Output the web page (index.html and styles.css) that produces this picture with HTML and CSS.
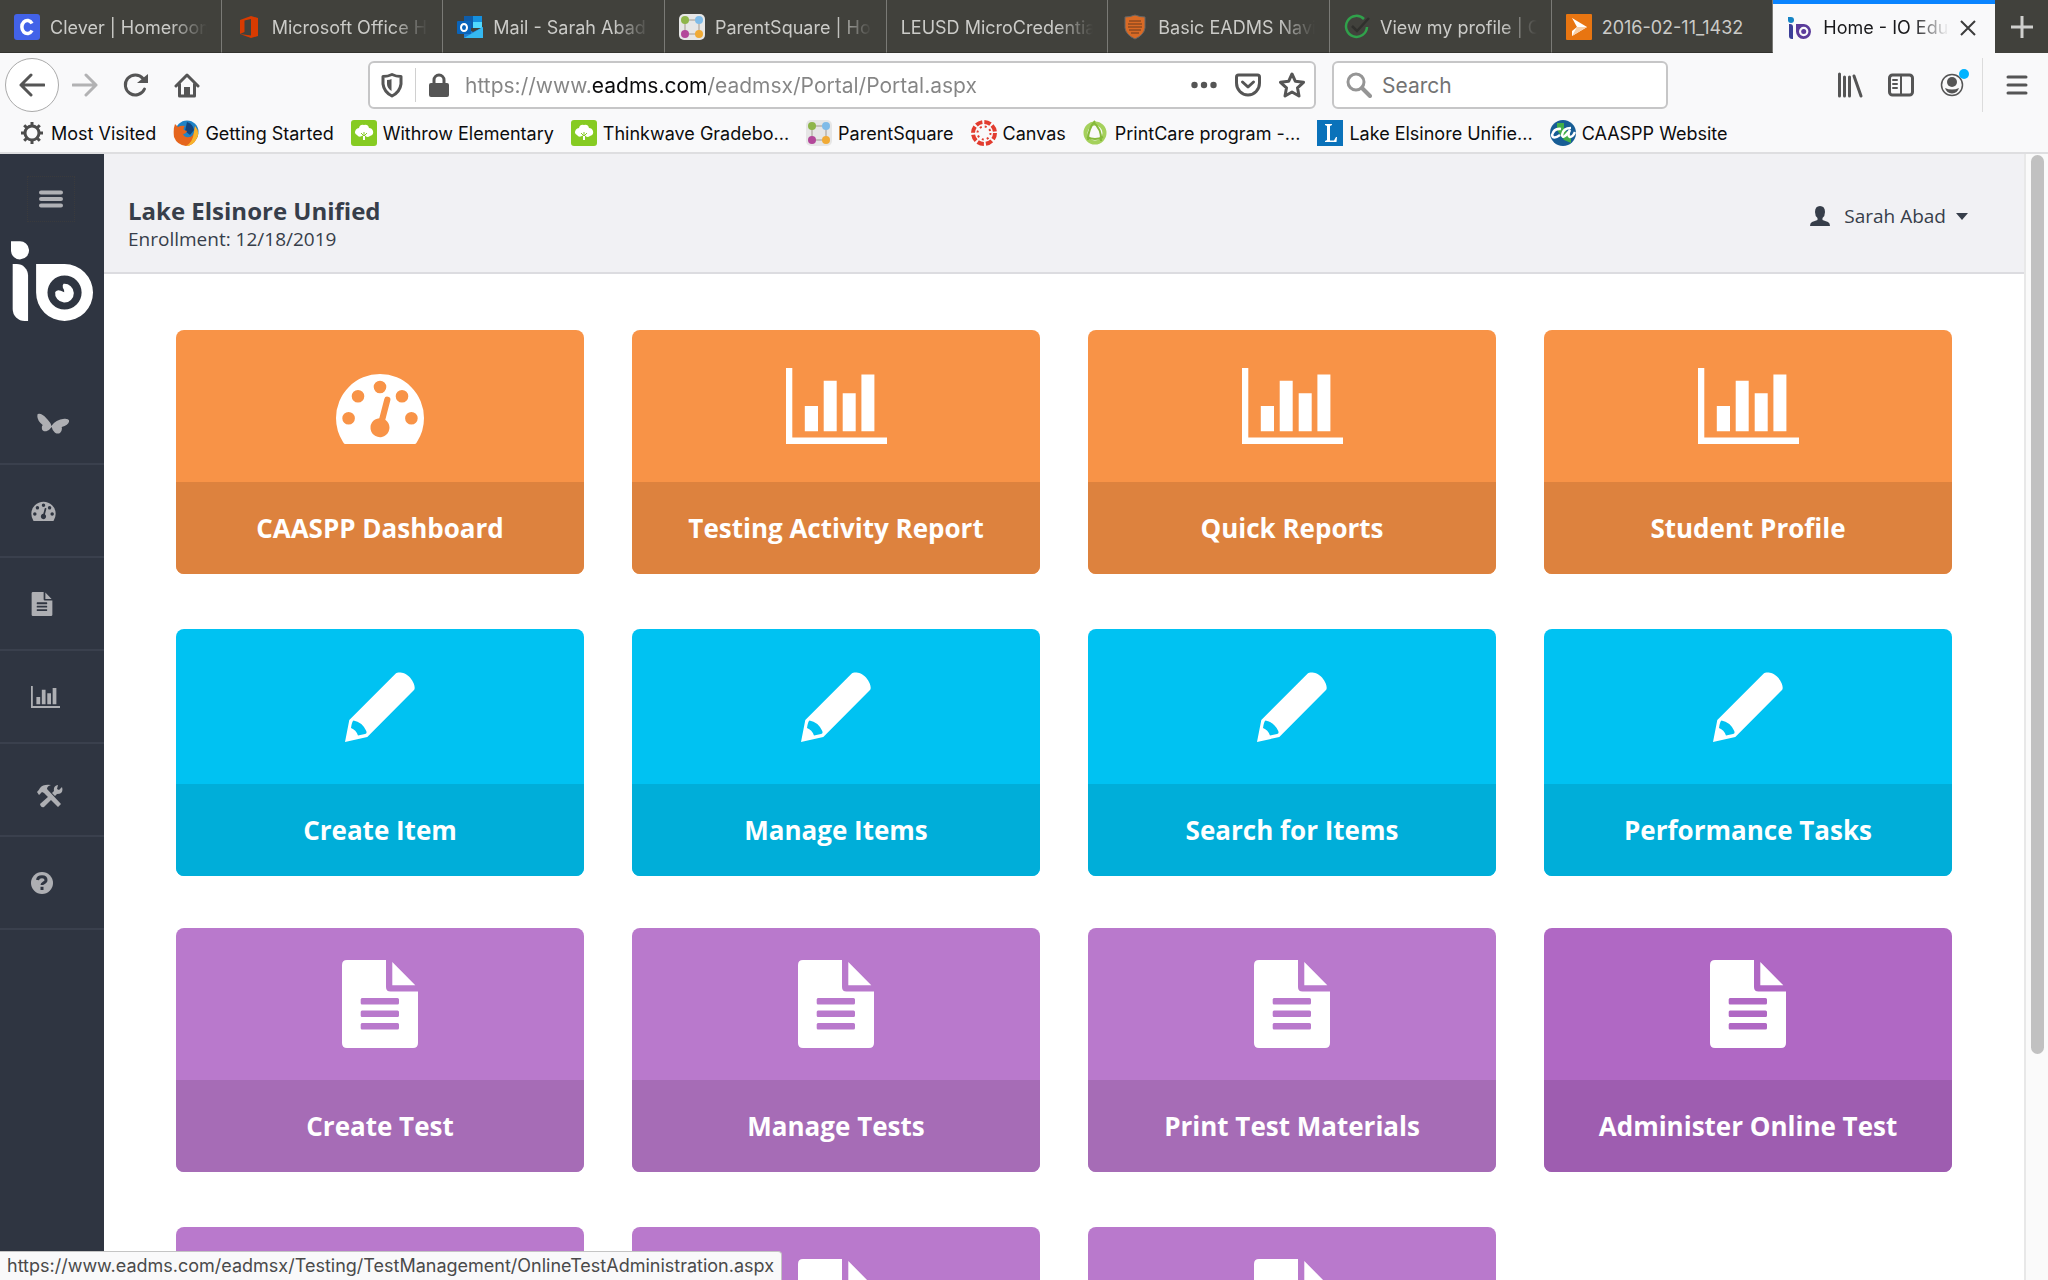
FILE: index.html
```
<!DOCTYPE html>
<html lang="en">
  <head>
    <meta charset="UTF-8" />
    <meta name="viewport" content="width=device-width, initial-scale=1.0" />
    <title>Home - IO Education</title>
    <link rel="stylesheet" href="styles.css">
  </head>
  <body>
    <!-- Shared icons -->
    <svg class="sprite" aria-hidden="true">
      <symbol id="gauge" viewBox="0 0 88 76">
        <path fill-rule="evenodd" d="M9 76Q8 76 7 74Q0 63 0 50A44 44 0 0 1 88 50Q88 63 81 74Q80 76 79 76ZM6.3 50.3a6.3 6.3 0 1 0 12.6 0a6.3 6.3 0 1 0-12.6 0ZM15.7 28.3a6.3 6.3 0 1 0 12.6 0a6.3 6.3 0 1 0-12.6 0ZM37.7 19a6.3 6.3 0 1 0 12.6 0a6.3 6.3 0 1 0-12.6 0ZM59.7 28.3a6.3 6.3 0 1 0 12.6 0a6.3 6.3 0 1 0-12.6 0ZM69.1 50.3a6.3 6.3 0 1 0 12.6 0a6.3 6.3 0 1 0-12.6 0ZM43.3 50.2L48.3 30.9A3.1 3.1 0 0 1 54.3 32.5L49.3 51.8A9.5 9.5 0 1 1 43.3 50.2Z" />
      </symbol>
      <symbol id="chart" viewBox="0 0 101 76">
        <path d="M0 0H6.3V69.5H101V76H0ZM18.8 38H32V63.3H18.8ZM37.7 12.7H50.7V63.3H37.7ZM56.7 25.3H69.7V63.3H56.7ZM75.4 6.4H88.4V63.3H75.4Z" />
      </symbol>
      <symbol id="pencil" viewBox="0 0 70 70">
        <path fill-rule="evenodd" d="M0 70L4.300 48L51 1.300C52.500-.2 60-.4 65 5.500C70 11.500 70.400 16.500 69 18L22.300 65ZM8.500 48.500Q7 49 6 56Q11 58 13 63.400L20 62Q22.500 61.500 21 58.500Q17 50 8.500 48.500Z" />
      </symbol>
      <symbol id="doc" viewBox="0 0 76 88">
        <path fill-rule="evenodd" d="M5 0H44V27Q44 31.500 48.500 31.500H76V83Q76 88 71 88H5Q0 88 0 83V5Q0 0 5 0ZM50.300 2L73.300 25.300H50.300ZM20 38H55.500Q57 38 57 39.500V43Q57 44.500 55.500 44.500H20Q18.700 44.500 18.700 43V39.500Q18.700 38 20 38ZM20 50.500H55.500Q57 50.500 57 52V55.500Q57 57 55.500 57H20Q18.700 57 18.700 55.500V52Q18.700 50.500 20 50.500ZM20 63H55.500Q57 63 57 64.500V68Q57 69.500 55.500 69.500H20Q18.700 69.500 18.700 68V64.500Q18.700 63 20 63Z" />
      </symbol>
      <symbol id="parentsquare" viewBox="0 0 26 26">
        <rect width="26" height="26" rx="5" fill="#e6e6e6" />
        <path d="M6 6H20V20H6Z" fill="none" stroke="#c4c0bb" stroke-width="2" />
        <circle cx="6" cy="6" r="4" fill="#8eb54a" />
        <circle cx="20" cy="6" r="4" fill="#7fbbe8" />
        <circle cx="6" cy="20" r="4" fill="#b3489a" />
        <circle cx="20" cy="20" r="4" fill="#f0aa35" />
      </symbol>
      <symbol id="tree" viewBox="0 0 26 26">
        <rect width="26" height="26" rx="3" fill="#86cb22" />
        <path d="M12 15.500Q8 18 6 15Q2.500 13 5 9.500Q6 8 8 8Q9 4 13 5Q17 4 18 8Q21 8 22 11Q23 15 19 16Q16 18 14 15.500V20H12Z" fill="#fff" />
        <path d="M10 13L13 16L16 13M13 12V16" fill="none" stroke="#86cb22" stroke-width="1" />
      </symbol>
    </svg>

    <header class="browser">
      <div class="tabs">
        <a class="tab" href="#">
          <svg class="favicon" viewBox="0 0 26 26"><rect width="26" height="26" rx="3" fill="#4262e8" /><path d="M18 9.500A5.500 6.500 0 1 0 18 16.500" fill="none" stroke="#fff" stroke-width="3.500" /></svg>
          <span class="tab-title">Clever | Homeroom</span>
        </a>
        <a class="tab" href="#">
          <svg class="favicon" viewBox="0 0 26 26"><path d="M4 6L15 2L22 4V22L15 24L4 20L15 21.500V5L8.500 6.500V18L4 20Z" fill="#d83b01" /></svg>
          <span class="tab-title">Microsoft Office Home</span>
        </a>
        <a class="tab" href="#">
          <svg class="favicon" viewBox="0 0 26 26"><path d="M7 2H25V14H7Z" fill="#1490df" /><path d="M7 2H16V14H7Z" fill="#0f5ca8" /><path d="M16 8H25V14H16Z" fill="#50d9ff" /><path d="M7 13L16 18L26 13V24H7Z" fill="#1f7fd4" /><path d="M7 24L26 13V24Z" fill="#35b8f1" /><rect y="7" width="14" height="13" rx="1" fill="#0a64ba" /><ellipse cx="7" cy="13.500" rx="3" ry="3.500" fill="none" stroke="#fff" stroke-width="2" /></svg>
          <span class="tab-title">Mail - Sarah Abad</span>
        </a>
        <a class="tab" href="#">
          <svg class="favicon"><use href="#parentsquare" /></svg>
          <span class="tab-title">ParentSquare | Home</span>
        </a>
        <a class="tab" href="#">
          <span class="tab-title">LEUSD MicroCredentials</span>
        </a>
        <a class="tab" href="#">
          <svg class="favicon" viewBox="0 0 26 26"><path d="M3 3Q8 3 13 1Q18 3 23 3V14Q22 21 13 25Q4 21 3 14Z" fill="#d96a25" stroke="#666" stroke-width="1" /><path d="M7 7H19M6 10H20M6 13H20M7 16H19M9 19H17" stroke="#6d3a1c" stroke-width="1" /></svg>
          <span class="tab-title">Basic EADMS Navigation</span>
        </a>
        <a class="tab" href="#">
          <svg class="favicon" viewBox="0 0 26 26"><path d="M20 5A10.500 10.500 0 1 0 23 13" fill="none" stroke="#30a14b" stroke-width="2.500" /><path d="M8 12L13 17L25 4" fill="none" stroke="#30302d" stroke-width="2.500" /></svg>
          <span class="tab-title">View my profile | Credly</span>
        </a>
        <a class="tab" href="#">
          <svg class="favicon" viewBox="0 0 26 26"><rect width="26" height="26" rx="1" fill="#e87511" /><path d="M6 4L21 13L6 22V4Z" fill="#fff" /><path d="M6 4L11 13L6 17Z" fill="#e87511" /><path d="M6 22L11 13H21Z" fill="#f8cfa8" /></svg>
          <span class="tab-title tab-title-full">2016-02-11_1432</span>
        </a>
        <a class="tab tab-active" href="#">
          <svg class="favicon" viewBox="0 0 26 26"><path d="M1 2H4A3 3 0 1 1 1 5Z" fill="#1685c5" /><path d="M2 9H3Q6 9 6 12V24H5Q2 24 2 21Z" fill="#3b3f98" /><path fill-rule="evenodd" d="M9 9H17A7.500 7.500 0 1 1 9 16.500ZM12 16.500a4.700 4.700 0 1 0 9.400 0a4.700 4.700 0 1 0-9.400 0Z" fill="#5b3c9b" /><circle cx="16.700" cy="16.500" r="2.500" fill="#5b3c9b" /></svg>
          <span class="tab-title">Home - IO Education</span>
          <svg class="tab-close" viewBox="0 0 18 18"><path d="M2 2L16 16M16 2L2 16" /></svg>
        </a>
        <button class="new-tab" aria-label="New tab">
          <svg viewBox="0 0 22 22"><path d="M11 0V22M0 11H22" /></svg>
        </button>
      </div>

      <div class="toolbar">
        <div class="nav-buttons">
          <button class="back" aria-label="Back">
            <svg viewBox="0 0 26 26"><path d="M25 13H2M12 3L2 13L12 23" /></svg>
          </button>
          <button class="forward" aria-label="Forward">
            <svg viewBox="0 0 26 26"><path d="M1 13H24M14 3L24 13L14 23" /></svg>
          </button>
          <button aria-label="Reload">
            <svg viewBox="0 0 26 26"><path d="M21.500 17A10 10 0 1 1 20 6.500" /><path class="solid" d="M25 2V11H14Z" /></svg>
          </button>
          <button aria-label="Home">
            <svg viewBox="0 0 26 26"><path d="M2 14L13 3L24 14M5.500 12V24H20.500V12" /><path class="solid" d="M10 15H16V24H10Z" /></svg>
          </button>
        </div>

        <div class="field url-bar">
          <svg class="icon" viewBox="0 0 26 26"><path d="M13 2.500Q17 4.500 22 4.500V12Q21 20 13 24Q5 20 4 12V4.500Q9 4.500 13 2.500Z" /><path class="solid" d="M12.500 7V19Q8 16 8 12V8Q11 8 12.500 7Z" /></svg>
          <span class="divider"></span>
          <svg class="icon" viewBox="0 0 26 26"><path d="M8 12V8A5 5 0 0 1 18 8V12" /><rect class="solid" x="3" y="11" width="20" height="14" rx="2" /></svg>
          <input class="url-input" type="text" aria-label="Address" value="https://www.eadms.com/eadmsx/Portal/Portal.aspx" />
          <button aria-label="Page actions">
            <svg viewBox="0 0 26 26"><g class="solid"><circle cx="3.500" cy="13" r="3.200" /><circle cx="13" cy="13" r="3.200" /><circle cx="22.500" cy="13" r="3.200" /></g></svg>
          </button>
          <button aria-label="Save to Pocket">
            <svg viewBox="0 0 26 26"><path d="M3.500 3H22.500Q24.500 3 24.500 5V11A11.500 12 0 0 1 1.500 11V5Q1.500 3 3.500 3ZM7.500 10L13 15L18.500 10" /></svg>
          </button>
          <button aria-label="Bookmark this page">
            <svg viewBox="0 0 26 26"><path d="M13 2L16.400 9.300L24.500 10.300L18.500 15.800L20 24L13 20L6 24L7.500 15.800L1.500 10.300L9.600 9.300Z" /></svg>
          </button>
        </div>

        <div class="field search-bar">
          <svg class="icon icon-light" viewBox="0 0 26 26"><circle cx="10" cy="10" r="8" /><path d="M16 16L24 24" stroke-width="4" /></svg>
          <input type="search" aria-label="Search" placeholder="Search" />
        </div>

        <div class="tools">
          <button aria-label="Library">
            <svg viewBox="0 0 26 26"><path d="M2.500 2V24M7.500 5V24M12.500 5V24M17 4L24 24" /></svg>
          </button>
          <button aria-label="Sidebars">
            <svg viewBox="0 0 26 26"><rect x="1.500" y="3" width="23" height="20" rx="3" /><path d="M13 3V23" stroke-width="2" /><path d="M5 8H9M5 12H9M5 16H9" stroke-width="2" /></svg>
          </button>
          <button class="account" aria-label="Account">
            <svg viewBox="0 0 26 26"><circle cx="13" cy="13" r="10.500" stroke-width="1.500" /><g class="solid"><circle cx="13" cy="10" r="5" /><path d="M6 16Q13 19 20 16Q18.500 21 13 21.500Q7.500 21 6 16Z" /></g></svg>
            <span class="account-dot"></span>
          </button>
          <button class="menu" aria-label="Open menu">
            <svg viewBox="0 0 26 26"><path d="M4 5H22M4 13H22M4 21H22" /></svg>
          </button>
        </div>
      </div>

      <nav class="bookmarks" aria-label="Bookmarks">
        <a href="#">
          <svg viewBox="0 0 26 26"><circle cx="13" cy="13" r="7" fill="none" stroke="#4c4c4c" stroke-width="3" /><path d="M13 2V6M13 20V24M2 13H6M20 13H24M5.200 5.200L8 8M18 18L20.800 20.800M5.200 20.800L8 18M18 8L20.800 5.200" stroke="#4c4c4c" stroke-width="3" /></svg>
          Most Visited
        </a>
        <a href="#">
          <svg viewBox="0 0 26 26"><circle cx="14" cy="12" r="11.500" fill="#1f83c6" /><path d="M14 2Q20 4 21 10L17 15L12 11Z" fill="#12457f" /><path d="M2 4L5 7Q8 5 12 6Q10 8 11 10L14 11Q13 14 10 14Q12 18 16 17Q20 17 21 12L22 6Q27 12 24 18Q20 26 13 26Q4 25 1 17Q0 9 2 4Z" fill="#e5651d" /><path d="M24 18Q20 26 13 26Q20 22 21 12L22 6Q27 12 24 18Z" fill="#f7b52c" /></svg>
          Getting Started
        </a>
        <a href="#"><svg><use href="#tree" /></svg>Withrow Elementary</a>
        <a href="#"><svg><use href="#tree" /></svg>Thinkwave Gradebo...</a>
        <a href="#"><svg><use href="#parentsquare" /></svg>ParentSquare</a>
        <a href="#">
          <svg viewBox="0 0 26 26"><circle cx="13" cy="13" r="11" fill="none" stroke="#e23c2f" stroke-width="4" stroke-dasharray="6.600 2.040" /><circle cx="13" cy="13" r="6.500" fill="none" stroke="#e23c2f" stroke-width="2" stroke-dasharray="2 3.100" /></svg>
          Canvas
        </a>
        <a href="#">
          <svg viewBox="0 0 26 26"><circle cx="12" cy="13" r="9.500" fill="none" stroke="#a5d15c" stroke-width="4" /><path d="M12 1Q5 9 5 20M20 17Q12 21 4 17M10 2Q19 9 18 21" fill="none" stroke="#86b93a" stroke-width="2" /></svg>
          PrintCare program -...
        </a>
        <a href="#">
          <svg viewBox="0 0 26 26"><rect width="26" height="26" fill="#0a72ba" /><path d="M8 4H15V5L13 6V20.500H17L19 17H20L19.500 22H8V21L10 20V6L8 5Z" fill="#fff" /></svg>
          Lake Elsinore Unifie...
        </a>
        <a href="#">
          <svg viewBox="0 0 26 26"><circle cx="13" cy="13" r="13" fill="#175d95" /><path d="M7 3H14V8L21 17V23L14 20L7 10Z" fill="#42ae49" /><path d="M11 9Q4 8 2 15Q3 20 10 15M21 8Q13 8 12 15Q13 20 20 10Q17 16 20 17Q23 17 25 12" fill="none" stroke="#fff" stroke-width="2.500" /></svg>
          CAASPP Website
        </a>
      </nav>
    </header>

    <div class="page">
      <aside class="sidebar">
        <button class="sidebar-toggle" aria-label="Toggle menu">
          <svg viewBox="0 0 24 18"><path d="M2 2.500H22M2 9H22M2 15.500H22" /></svg>
        </button>
        <a class="logo" href="#" aria-label="IO Education">
          <svg viewBox="33 272 245 239">
            <path d="M33 273H58A27 27 0 1 1 33 302Z" />
            <path d="M38 341H50A34 34 0 0 1 84 375V511H74A36 36 0 0 1 38 475Z" />
            <path fill-rule="evenodd" d="M108 341H193A85 85 0 1 1 108 426ZM142 426a51 51 0 1 0 102 0a51 51 0 1 0-102 0Z" />
            <path d="M190 400A28 28 0 1 1 165 424Q172 416 182 421L192 425Q193 419 188 412Q186 404 190 400Z" />
          </svg>
        </a>
        <nav class="side-nav">
          <a class="side-link side-link-inset" href="#" aria-label="Butterfly">
            <svg width="32" height="22" viewBox="0 0 96 62"><path d="M2 1Q14-3 28 14Q42 28 43 37Q56 17 82 15Q98 14 96 24Q94 34 74 40Q77 50 69 58Q62 62 54 57Q46 51 44 40Q38 49 28 53Q12 54 15 38Q16 36 17 34Q-3 18 2 1Z" /></svg>
          </a>
          <a class="side-link" href="#" aria-label="Dashboards"><svg width="25" height="21"><use href="#gauge" /></svg></a>
          <a class="side-link" href="#" aria-label="Tests"><svg width="22" height="24"><use href="#doc" /></svg></a>
          <a class="side-link" href="#" aria-label="Reports"><svg width="29" height="22"><use href="#chart" /></svg></a>
          <a class="side-link side-link-inset" href="#" aria-label="Tools">
            <svg width="26" height="24" viewBox="0 0 26 24"><path d="M0 8Q2 6 3 4Q6 0 14 1Q10 2 10 5L24 20L21 23L7 9L5 8L2 11Z" /><path d="M3 20L12 12L15 15L7 23Q4 24 3 20ZM15 9L17 7Q16 2 21 1L20 5L22 6L25 3Q27 10 20 10L18 12Z" /></svg>
          </a>
          <a class="side-link" href="#" aria-label="Help">
            <svg width="22" height="22" viewBox="0 0 22 22"><circle cx="11" cy="11" r="11" /><path class="cut" d="M6.500 8Q7 4.800 11 4.800Q15 4.800 15 8Q15 10 12.500 11Q11 11.700 11 13" /><path class="cut" d="M11 14.800V18" /></svg>
          </a>
        </nav>
      </aside>

      <div class="content">
        <div class="page-header">
          <div>
            <h1>Lake Elsinore Unified</h1>
            <p>Enrollment: 12/18/2019</p>
          </div>
          <button class="user">
            <svg class="user-icon" viewBox="0 0 20 20"><path d="M10 0Q15 0 15 6Q15 10 12.500 12V14L18 16Q20 17 20 20H0Q0 17 2 16L7.500 14V12Q5 10 5 6Q5 0 10 0Z" /></svg>
            Sarah Abad
            <svg class="caret" viewBox="0 0 12 7"><path d="M0 0H12L6 7Z" /></svg>
          </button>
        </div>

        <main class="cards">
          <a class="card orange" href="#">
            <span class="card-icon"><svg width="88" height="76"><use href="#gauge" /></svg></span>
            <span class="card-label">CAASPP Dashboard</span>
          </a>
          <a class="card orange" href="#">
            <span class="card-icon"><svg width="101" height="76"><use href="#chart" /></svg></span>
            <span class="card-label">Testing Activity Report</span>
          </a>
          <a class="card orange" href="#">
            <span class="card-icon"><svg width="101" height="76"><use href="#chart" /></svg></span>
            <span class="card-label">Quick Reports</span>
          </a>
          <a class="card orange" href="#">
            <span class="card-icon"><svg width="101" height="76"><use href="#chart" /></svg></span>
            <span class="card-label">Student Profile</span>
          </a>

          <a class="card blue" href="#">
            <span class="card-icon"><svg width="70" height="70"><use href="#pencil" /></svg></span>
            <span class="card-label">Create Item</span>
          </a>
          <a class="card blue" href="#">
            <span class="card-icon"><svg width="70" height="70"><use href="#pencil" /></svg></span>
            <span class="card-label">Manage Items</span>
          </a>
          <a class="card blue" href="#">
            <span class="card-icon"><svg width="70" height="70"><use href="#pencil" /></svg></span>
            <span class="card-label">Search for Items</span>
          </a>
          <a class="card blue" href="#">
            <span class="card-icon"><svg width="70" height="70"><use href="#pencil" /></svg></span>
            <span class="card-label">Performance Tasks</span>
          </a>

          <a class="card purple" href="#">
            <span class="card-icon"><svg width="76" height="88"><use href="#doc" /></svg></span>
            <span class="card-label">Create Test</span>
          </a>
          <a class="card purple" href="#">
            <span class="card-icon"><svg width="76" height="88"><use href="#doc" /></svg></span>
            <span class="card-label">Manage Tests</span>
          </a>
          <a class="card purple" href="#">
            <span class="card-icon"><svg width="76" height="88"><use href="#doc" /></svg></span>
            <span class="card-label">Print Test Materials</span>
          </a>
          <a class="card purple hovered" href="#">
            <span class="card-icon"><svg width="76" height="88"><use href="#doc" /></svg></span>
            <span class="card-label">Administer Online Test</span>
          </a>

          <a class="card purple" href="#" aria-label="Tests">
            <span class="card-icon"><svg width="76" height="88"><use href="#doc" /></svg></span>
            <span class="card-label"></span>
          </a>
          <a class="card purple" href="#" aria-label="Tests">
            <span class="card-icon"><svg width="76" height="88"><use href="#doc" /></svg></span>
            <span class="card-label"></span>
          </a>
          <a class="card purple" href="#" aria-label="Tests">
            <span class="card-icon"><svg width="76" height="88"><use href="#doc" /></svg></span>
            <span class="card-label"></span>
          </a>
        </main>
      </div>

      <div class="scrollbar"><div class="thumb"></div></div>
    </div>

    <div class="status">https://www.eadms.com/eadmsx/Testing/TestManagement/OnlineTestAdministration.aspx</div>
  </body>
</html>
```

FILE: styles.css
```
* {
  box-sizing: border-box;
}

body {
  margin: 0;
  height: 100vh;
  display: flex;
  flex-direction: column;
  overflow: hidden;
  background: #fff;
  font-family: "Open Sans", "Noto Sans", sans-serif;
}

a {
  color: inherit;
  text-decoration: none;
}

button {
  padding: 0;
  border: 0;
  background: none;
  font: inherit;
  color: inherit;
}

svg {
  display: block;
  flex: none;
}

.sprite {
  position: absolute;
  width: 0;
  height: 0;
}

/* Browser window */
.browser {
  flex: none;
  background: #f9f9fa;
  border-bottom: 2px solid #dedee0;
  font-family: Inter, "Liberation Sans", sans-serif;
}

.tabs {
  display: grid;
  grid-template-columns: repeat(9, minmax(0, 1fr)) 53px;
  height: 53px;
  background: #41413c;
  color: #cbcbc8;
}

.tab {
  display: flex;
  align-items: center;
  gap: 10px;
  padding: 2px 14px 0;
  border-right: 1px solid #7a7a76;
  border-bottom: 1px solid #33332f;
  font-size: 18px;
}

.favicon {
  width: 26px;
  height: 26px;
}

/* Long titles fade out instead of being cut */
.tab-title {
  flex: 1;
  overflow: hidden;
  white-space: nowrap;
  -webkit-mask-image: linear-gradient(to left, transparent, #000 36px);
  mask-image: linear-gradient(to left, transparent, #000 36px);
}

.tab-title-full {
  -webkit-mask-image: none;
  mask-image: none;
}

.tab-active {
  padding: 0 18px 2px 14px;
  background: #f9f9fa;
  color: #1a1a1c;
  border-top: 4px solid #0a84ff;
  border-right: 0;
  border-bottom: 0;
}

.tab-close {
  width: 18px;
  height: 18px;
  stroke: #3c3c3c;
  stroke-width: 2;
}

.new-tab {
  display: flex;
  align-items: center;
  justify-content: center;
}

.new-tab svg {
  width: 22px;
  height: 22px;
  stroke: #d0d0ce;
  stroke-width: 3;
}

.toolbar {
  display: flex;
  align-items: center;
  height: 64px;
}

.toolbar svg {
  width: 26px;
  height: 26px;
  fill: none;
  stroke: #555;
  stroke-width: 3;
  stroke-linecap: round;
  stroke-linejoin: round;
}

.toolbar .solid {
  fill: #555;
  stroke: none;
}

.nav-buttons {
  display: flex;
  align-items: center;
  gap: 25px;
  width: 368px;
  padding-left: 5px;
}

.nav-buttons .back {
  display: flex;
  align-items: center;
  justify-content: center;
  width: 54px;
  height: 54px;
  margin-right: -12px;
  border: 1px solid #aaa;
  border-radius: 50%;
  background: #fff;
}

.toolbar .forward svg {
  stroke: #b2b2b3;
}

.field {
  display: flex;
  align-items: center;
  height: 48px;
  border: 2px solid #c6c6c7;
  border-radius: 6px;
  background: #fff;
}

.field input {
  flex: 1;
  min-width: 0;
  padding: 0;
  border: 0;
  outline: 0;
  background: none;
  font-family: inherit;
  font-size: 21px;
}

.url-bar {
  flex: 1;
  gap: 18px;
  padding: 0 9px;
}

.url-bar .divider {
  width: 1px;
  height: 34px;
  margin: 0 -8px;
  background: #d0d0d0;
}

/* Only the domain is dark in the address */
.field .url-input {
  margin-left: -5px;
  color: transparent;
  background: linear-gradient(to right, #858585 127px, #0c0c0d 127px, #0c0c0d 244px, #858585 244px);
  -webkit-background-clip: text;
  background-clip: text;
}

.search-bar {
  width: 336px;
  margin-left: 16px;
  padding: 0 12px;
  gap: 10px;
}

.toolbar .icon-light {
  stroke: #959595;
}

.search-bar input::placeholder {
  color: #737373;
  opacity: 1;
}

.tools {
  display: flex;
  align-items: center;
  gap: 25px;
  width: 380px;
  padding-right: 18px;
  justify-content: flex-end;
}

.account {
  position: relative;
}

.account-dot {
  position: absolute;
  top: -3px;
  right: -4px;
  width: 10px;
  height: 10px;
  border-radius: 50%;
  background: #00b3ff;
}

.tools .menu {
  display: flex;
  align-items: center;
  height: 54px;
  padding-left: 21px;
  margin-left: -8px;
  border-left: 1px solid #dcdcdc;
}

.bookmarks {
  display: flex;
  align-items: center;
  gap: 17px;
  height: 35px;
  padding: 0 19px 3px;
  font-size: 18px;
  color: #0c0c0d;
}

.bookmarks a {
  display: flex;
  align-items: center;
  gap: 6px;
  white-space: nowrap;
}

.bookmarks svg {
  width: 26px;
  height: 26px;
}

/* Page */
.page {
  flex: 1;
  min-height: 0;
  display: flex;
}

.sidebar {
  flex: none;
  width: 104px;
  padding-top: 22px;
  background: #2f3541;
}

.sidebar-toggle {
  display: flex;
  align-items: center;
  justify-content: center;
  width: 48px;
  height: 46px;
  margin-left: 27px;
  border: 1px dotted #3a3a3c;
}

.sidebar-toggle svg {
  width: 24px;
  height: 18px;
  stroke: #b0b1b5;
  stroke-width: 4;
  stroke-linecap: round;
}

.logo {
  display: block;
  margin: 19px 11px 51px;
}

.logo svg {
  width: 82px;
  height: 80px;
  fill: #fff;
}

.side-link {
  display: flex;
  align-items: center;
  height: 93px;
  padding-left: 31px;
  border-bottom: 2px solid #3a404d;
}

.side-link-inset {
  padding-top: 12px;
  padding-left: 37px;
}

.side-link svg {
  fill: #aeafb3;
}

.side-link .cut {
  fill: none;
  stroke: #2f3541;
  stroke-width: 3;
}

.content {
  flex: 1;
  min-width: 0;
  overflow: hidden;
}

.page-header {
  display: flex;
  align-items: center;
  justify-content: space-between;
  height: 120px;
  padding: 22px 56px 0 24px;
  background: #f1f1f4;
  border-bottom: 2px solid #dcdce0;
  color: #373e4a;
}

.page-header h1 {
  margin: 0;
  font-size: 24px;
  line-height: 30px;
}

.page-header p {
  margin: 0;
  font-size: 19px;
  line-height: 26px;
}

.user {
  display: flex;
  align-items: center;
  margin-bottom: 16px;
  font-size: 19px;
}

.user svg {
  fill: #373e4a;
}

.user-icon {
  width: 20px;
  height: 20px;
  margin-right: 14px;
}

.caret {
  width: 12px;
  height: 7px;
  margin-left: 10px;
}

.cards {
  display: grid;
  grid-template-columns: repeat(4, 1fr);
  grid-auto-rows: 251px;
  gap: 48px;
  align-items: start;
  padding: 56px 72px;
}

.card {
  display: block;
  border-radius: 8px;
  overflow: hidden;
  color: #fff;
}

.card-icon {
  display: flex;
  align-items: center;
  justify-content: center;
  height: 152px;
}

.card-icon svg {
  fill: #fff;
}

.card-label {
  display: flex;
  align-items: center;
  justify-content: center;
  height: 92px;
  font-size: 26px;
  font-weight: 700;
}

.orange {
  background: #f89347;
}

.orange .card-label {
  background: #dd823e;
}

.blue {
  background: #00c2f2;
}

.blue .card-icon {
  height: 155px;
}

.blue .card-label {
  background: #00aed9;
}

.purple {
  background: #b979cc;
}

.purple .card-label {
  background: #a66cb6;
}

.purple.hovered {
  background: #b068c4;
}

.purple.hovered .card-label {
  background: #9e5db0;
}

.scrollbar {
  flex: none;
  width: 24px;
  padding: 1px 5px;
  background: #fafafa;
  border-left: 2px solid #e8e8e8;
}

.thumb {
  width: 13px;
  height: 80%;
  border-radius: 7px;
  background: #c1c1c1;
}

/* Link target shown over the bottom left corner */
.status {
  position: fixed;
  left: 0;
  bottom: 0;
  height: 29px;
  padding: 0 7px;
  border-top: 1px solid #c4c4c4;
  border-right: 1px solid #c4c4c4;
  border-top-right-radius: 4px;
  background: #f9f9fa;
  color: #4a4a4a;
  font-family: Inter, "Liberation Sans", sans-serif;
  font-size: 18px;
  line-height: 28px;
}
```
